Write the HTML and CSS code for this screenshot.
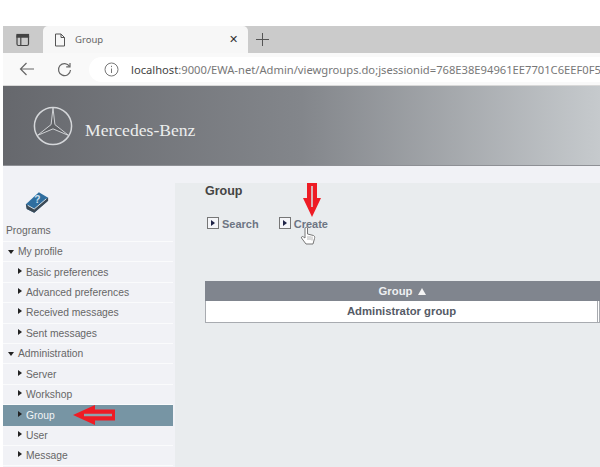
FILE: index.html
```html
<!DOCTYPE html>
<html lang="en">

<head>
    <meta charset="UTF-8">
    <title>Group</title>
    <link rel="stylesheet" href="styles.css">
</head>

<body>
    <div class="browser">
        <div class="tabstrip">
            <div class="tab-btn">
                <svg width="14" height="14" viewBox="0 0 14 14" fill="none" stroke="#444" stroke-width="1.2">
                    <rect x="1" y="1.5" width="11.5" height="11" rx="1.5"/>
                    <rect x="1" y="1.5" width="11.5" height="2.6" fill="#444"/>
                    <path d="M4.8 4v8.5"/>
                </svg>
            </div>
            <div class="tab">
                <svg width="12" height="14" viewBox="0 0 12 14" fill="none" stroke="#555" stroke-width="1">
                    <path d="M1.5 1h5.5l3.5 3.500v8.500h-9z"/>
                    <path d="M7 1v3.500h3.500"/>
                </svg>
                <span class="tab-title">Group</span>
                <span class="tab-close">✕</span>
            </div>
            <svg class="tab-new" width="13" height="13" viewBox="0 0 13 13" stroke="#555" stroke-width="1">
                <path d="M6.500 0v13M0 6.500h13"/>
            </svg>
        </div>
        <div class="toolbar">
            <svg class="back" width="16" height="14" viewBox="0 0 16 14" fill="none" stroke="#666" stroke-width="1.2">
                <path d="M15 7H1.500M7.500 1 1.500 7l6 6"/>
            </svg>
            <svg class="reload" width="15" height="15" viewBox="0 0 15 15" fill="none" stroke="#666" stroke-width="1.2">
                <path d="M12.600 4.400A6 6 0 1 0 13.500 8"/>
                <path d="M13 1v3.800H9.200"/>
            </svg>
            <div class="address">
                <svg class="info" width="15" height="15" viewBox="0 0 15 15" fill="none" stroke="#777" stroke-width="1">
                    <circle cx="7.500" cy="7.500" r="6.500"/>
                    <path d="M7.500 6.500v4.500M7.500 3.800v1.300"/>
                </svg>
                <span class="url"><b>localhost</b>:9000/EWA-net/Admin/viewgroups.do;jsessionid=768E38E94961EE7701C6EEF0F5</span>
            </div>
        </div>
    </div>

    <header class="banner">
        <svg class="star" width="40" height="40" viewBox="0 0 42 42" fill="none" stroke="#d5d7da">
            <circle cx="21" cy="21" r="19.500" stroke-width="1.6"/>
            <path d="M21 2 23 19.500 37.500 31 21 24 4.500 31 19 19.500z" fill="#5f6165" stroke-width="1"/>
        </svg>
        <span class="brand">Mercedes-Benz</span>
    </header>

    <div class="main">
        <nav class="sidebar">
            <div class="programs">
                <svg width="26" height="23" viewBox="0 0 28 24">
                    <path d="M2 14 16 1l10 6-1 4-14 12-8-4z" fill="#2f6e9f"/>
                    <path d="M2 14l9 5 15-12v3L11 23l-8-4z" fill="#3d4a55"/>
                    <path d="M4 15l7 4 13-11" fill="none" stroke="#dfe6ea"/>
                    <text x="11" y="13" class="book-mark">?</text>
                </svg>
                <span>Programs</span>
            </div>
            <ul class="menu">
                <li class="group-row"><i class="down"></i>My profile</li>
                <li class="item"><i class="right"></i>Basic preferences</li>
                <li class="item"><i class="right"></i>Advanced preferences</li>
                <li class="item"><i class="right"></i>Received messages</li>
                <li class="item"><i class="right"></i>Sent messages</li>
                <li class="group-row"><i class="down"></i>Administration</li>
                <li class="item"><i class="right"></i>Server</li>
                <li class="item"><i class="right"></i>Workshop</li>
                <li class="item active"><i class="right"></i>Group</li>
                <li class="item"><i class="right"></i>User</li>
                <li class="item"><i class="right"></i>Message</li>
            </ul>
        </nav>

        <section class="content">
            <h1>Group</h1>
            <div class="actions">
                <a class="action"><i class="play"></i>Search</a>
                <a class="action"><i class="play"></i>Create</a>
            </div>
            <div class="table">
                <div class="table-head">Group <span class="sort"></span></div>
                <div class="table-row">
                    <div class="cell">Administrator group</div>
                    <div class="cell-rest"></div>
                </div>
            </div>
        </section>
    </div>

    <!-- annotations painted over the screenshot -->
    <svg class="arrow arrow-down" width="18" height="34" viewBox="0 0 18 34">
        <path d="M4 0h10v15h4L9 34 0 15h4z" fill="#ee1c25"/>
        <path d="M9 3v21" stroke="#d9b4b8" stroke-width="2"/>
    </svg>
    <svg class="arrow arrow-left" width="43" height="20" viewBox="0 0 43 20">
        <path d="M0 10 22 0v4.500h20v11H22V20z" fill="#ee1c25"/>
        <path d="M11 10h28" stroke="#8fa3ad" stroke-width="2.500"/>
    </svg>
    <svg class="cursor" width="16" height="21" viewBox="0 0 16 21">
        <path d="M5 2c1-1 2-1 2.500 0v6l6 1.500c1 .5 1.500 1.500 1 3l-1.500 5.500H6l-4.500-6c-.5-1.500 1-2 2-1L5 12z" fill="#fff" stroke="#777" stroke-width="1"/>
        <path d="M8 10v4M10 10v4M12 10.500v4" stroke="#999" stroke-width=".7"/>
    </svg>
</body>

</html>
```

FILE: styles.css
```css
* {
    box-sizing: border-box;
    margin: 0;
    padding: 0;
}

html,
body {
    height: 467px;
    overflow: hidden;
}

body {
    position: relative;
    background: #fff;
    padding: 26px 0 0 3px;
    font-family: "Liberation Sans", Arial, sans-serif;
    color: #555;
}

.tabstrip {
    display: flex;
    align-items: center;
    height: 27px;
    background: #cbcbcb;
}

.tab-btn {
    display: flex;
    justify-content: center;
    width: 40px;
}

.tab {
    display: flex;
    align-items: center;
    width: 205px;
    height: 27px;
    padding-left: 11px;
    background: #f7f7f7;
    border-radius: 5px 5px 0 0;
}

.tab-title {
    flex: 1;
    margin-left: 9px;
    font-family: "Noto Sans", sans-serif;
    font-size: 9.5px;
    color: #666;
}

.tab-close {
    margin-right: 10px;
    font-size: 11px;
    color: #333;
}

.tab-new {
    margin-left: 8px;
}

.toolbar {
    display: flex;
    align-items: center;
    height: 33px;
    background: #f9f9f9;
    border-bottom: 1px solid #d8d8d8;
}

.back {
    margin-left: 16px;
}

.reload {
    margin-left: 22px;
}

.address {
    display: flex;
    flex: 1;
    align-items: center;
    min-width: 0;
    height: 25px;
    margin-left: 17px;
    padding-left: 15px;
    background: #fff;
    border-radius: 13px 0 0 13px;
    overflow: hidden;
}

.info {
    flex: none;
}

.url {
    margin-left: 12px;
    font-family: "Noto Sans", sans-serif;
    font-size: 11.2px;
    color: #777;
    white-space: nowrap;
}

.url b {
    font-weight: 400;
    color: #444;
}

.banner {
    display: flex;
    align-items: center;
    height: 80px;
    padding-left: 30px;
    background: linear-gradient(90deg, #66686d 0%, #83868b 50%, #c6cacd 100%);
    border-bottom: 1px solid #8e9095;
}

.brand {
    margin: 9px 0 0 12px;
    font-family: "Liberation Serif", serif;
    font-size: 17.6px;
    color: #eceded;
}

.main {
    display: flex;
    height: 301px;
    background: #f1f2f6;
}

.sidebar {
    flex: none;
    width: 170px;
}

.programs {
    display: flex;
    flex-direction: column;
    height: 76px;
    padding: 25px 0 0 3px;
    font-size: 10.3px;
    color: #666;
    border-bottom: 1px solid #fafbfc;
}

.programs svg {
    margin: 0 0 11px 18px;
}

.book-mark {
    font-size: 11px;
    font-weight: 700;
    fill: #cfe0ee;
}

.menu {
    list-style: none;
}

.menu li {
    display: flex;
    align-items: center;
    height: 20.4px;
    font-size: 10.3px;
    color: #666;
    border-bottom: 1px solid #fafbfc;
}

.group-row {
    padding-left: 5px;
}

.item {
    padding-left: 15px;
}

.menu .active {
    background: #7795a4;
    color: #f1f4f6;
    border-bottom: none;
}

.down {
    width: 0;
    height: 0;
    margin-right: 4px;
    border-left: 3px solid transparent;
    border-right: 3px solid transparent;
    border-top: 4px solid #222;
}

.right {
    width: 0;
    height: 0;
    margin: -3px 4px 0 0;
    border-top: 3px solid transparent;
    border-bottom: 3px solid transparent;
    border-left: 4.5px solid #222;
}

.content {
    flex: 1;
    margin: 17px 0 0 2px;
    padding: 1px 0 0 30px;
    background: #e9ecee;
}

h1 {
    font-size: 12.5px;
    line-height: 15px;
    color: #444;
}

.actions {
    display: flex;
    gap: 18px;
    margin-top: 19px;
}

.action {
    display: flex;
    align-items: center;
    font-size: 11px;
    font-weight: 700;
    color: #6d7583;
}

.play {
    position: relative;
    width: 12px;
    height: 12px;
    margin: -2px 3px 0 2px;
    background: #f4f5f8;
    border: 1px solid #777;
}

.play::after {
    content: "";
    position: absolute;
    top: 2px;
    left: 3px;
    border-top: 3px solid transparent;
    border-bottom: 3px solid transparent;
    border-left: 4px solid #1f2347;
}

.table {
    margin-top: 51px;
}

.table-head {
    display: flex;
    align-items: center;
    justify-content: center;
    gap: 6px;
    width: 395px;
    height: 20px;
    background: #80858e;
    font-size: 11.3px;
    font-weight: 700;
    color: #eef0f2;
}

.sort {
    width: 0;
    height: 0;
    border-left: 4px solid transparent;
    border-right: 4px solid transparent;
    border-bottom: 7px solid #f4f4f4;
}

.table-row {
    display: flex;
    width: 395px;
    height: 22px;
    background: #fff;
    border: 1px solid #a8abb0;
    border-top: none;
}

.cell {
    width: 392px;
    font-size: 11.3px;
    font-weight: 700;
    line-height: 20px;
    text-align: center;
    color: #555b66;
    border-right: 1px solid #a8abb0;
}

.arrow,
.cursor {
    position: absolute;
}

.arrow-down {
    top: 183px;
    left: 303px;
}

.arrow-left {
    top: 405px;
    left: 73px;
}

.cursor {
    top: 226px;
    left: 300px;
}
```
